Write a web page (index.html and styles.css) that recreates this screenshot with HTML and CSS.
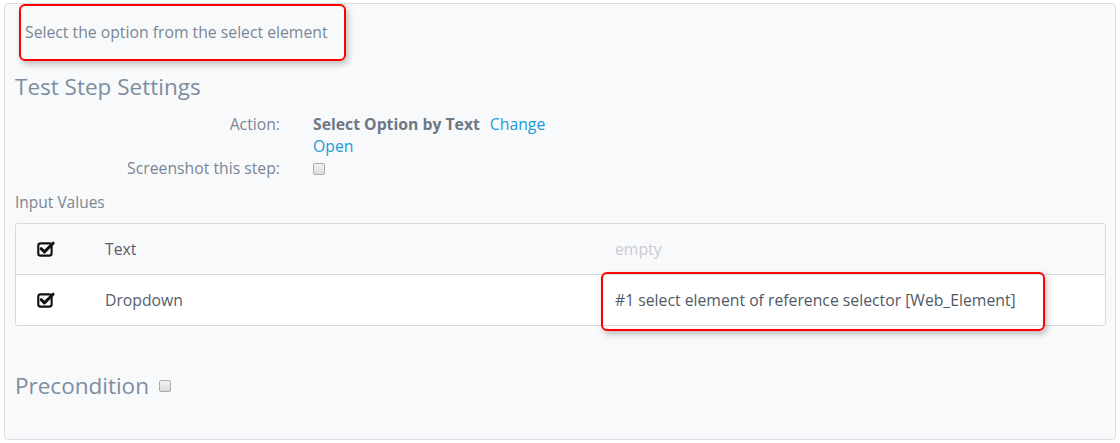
FILE: index.html
```html
<!DOCTYPE html>
<html>
<head>
<meta charset="utf-8">
<link rel="stylesheet" href="styles.css">
</head>
<body>
<div class="panel">
  <p class="desc">Select the option from the select element</p>
  <h2 class="title">Test Step Settings</h2>
  <div class="form">
    <div class="frow">
      <div class="flabel">Action:</div>
      <div class="fval"><strong class="action">Select Option by Text</strong><a class="link change">Change</a><br><a class="link">Open</a></div>
    </div>
    <div class="frow">
      <div class="flabel">Screenshot this step:</div>
      <div class="fval"><span class="cbox"></span></div>
    </div>
  </div>
  <div class="sub">Input Values</div>
  <div class="table">
    <div class="trow odd">
      <div class="tcheck"><svg width="18" height="16" viewBox="0 0 17 15"><rect x="1.2" y="2.2" width="12.6" height="11.6" rx="2.2" fill="none" stroke="#111" stroke-width="2"/><path d="M4 7.2 L7 10.2 L15.2 2" fill="none" stroke="#111" stroke-width="2.8" stroke-linecap="round" stroke-linejoin="round"/></svg></div>
      <div class="tname">Text</div>
      <div class="tvalue empty">empty</div>
    </div>
    <div class="trow">
      <div class="tcheck"><svg width="18" height="16" viewBox="0 0 17 15"><rect x="1.2" y="2.2" width="12.6" height="11.6" rx="2.2" fill="none" stroke="#111" stroke-width="2"/><path d="M4 7.2 L7 10.2 L15.2 2" fill="none" stroke="#111" stroke-width="2.8" stroke-linecap="round" stroke-linejoin="round"/></svg></div>
      <div class="tname">Dropdown</div>
      <div class="tvalue">#1 select element of reference selector [Web_Element]</div>
    </div>
  </div>
  <h2 class="title pre">Precondition <span class="cbox"></span></h2>
</div>
<div class="mark mark1"></div>
<div class="mark mark2"></div>
</body>
</html>
```
FILE: styles.css
```css
html, body {
  margin: 0;
  padding: 0;
  background: #fff;
}
body {
  font-family: "Open Sans", "Liberation Sans", sans-serif;
  color: #6f7c8c;
  position: relative;
  width: 1120px;
  height: 443px;
  overflow: hidden;
}
.panel {
  margin: 3px 4px 0 4px;
  border: 1px solid #dcdfe3;
  border-radius: 4px;
  background: #f8f9fb;
  padding: 0 9px 0 10px;
  box-sizing: border-box;
  height: 437px;
}
.desc {
  margin: 0;
  padding: 17px 0 0 10px;
  font-size: 15.75px;
  line-height: 22px;
  color: #7b8695;
}
.title {
  margin: 0;
  padding-top: 28px;
  font-weight: 400;
  font-size: 22.5px;
  line-height: 32px;
  color: #7d8ea1;
}
.form {
  padding-top: 10px;
}
.frow {
  display: flex;
}
.flabel {
  width: 265px;
  text-align: right;
  font-size: 15.75px;
  line-height: 22px;
  color: #7a8594;
}
.fval {
  padding-left: 33px;
  font-size: 15.75px;
  line-height: 22px;
}
.action {
  color: #6d7885;
  font-weight: 700;
}
.link {
  color: #1e9bd7;
}
.change {
  margin-left: 10px;
}
.cbox {
  display: inline-block;
  width: 10px;
  height: 10px;
  border: 1px solid #a9abae;
  border-radius: 2px;
  background: linear-gradient(#f1f1f1, #dcdcdc);
  vertical-align: middle;
  margin-top: -2px;
}
.sub {
  margin-top: 13px;
  font-size: 15.5px;
  line-height: 20px;
  color: #7a8594;
}
.table {
  margin-top: 11px;
  border: 1px solid #d7dadd;
  border-radius: 3px;
  background: #fff;
  overflow: hidden;
}
.trow {
  display: flex;
  align-items: center;
  height: 50px;
  font-size: 15.75px;
  color: #56606d;
}
.trow + .trow {
  border-top: 1px solid #d7dadd;
}
.trow.odd {
  background: #f8f9fa;
}
.tcheck {
  width: 89px;
  padding-left: 21px;
  box-sizing: border-box;
  display: flex;
  align-items: center;
}
.tcheck svg {
  display: block;
}
.tname {
  width: 510px;
}
.tvalue {
  flex: 1;
  color: #4f5966;
}
.tvalue.empty {
  color: #c9ccd0;
}
.pre {
  padding-top: 44px;
}
.pre .cbox {
  margin-left: 4px;
  margin-top: -4px;
}
.mark {
  position: absolute;
  border: 2px solid #ff0000;
  border-radius: 6px;
  box-shadow: 2px 3px 6px rgba(0, 0, 0, 0.25);
  box-sizing: border-box;
}
.mark1 {
  left: 19px;
  top: 4px;
  width: 327px;
  height: 57px;
}
.mark2 {
  left: 601px;
  top: 272px;
  width: 444px;
  height: 59px;
}
```
